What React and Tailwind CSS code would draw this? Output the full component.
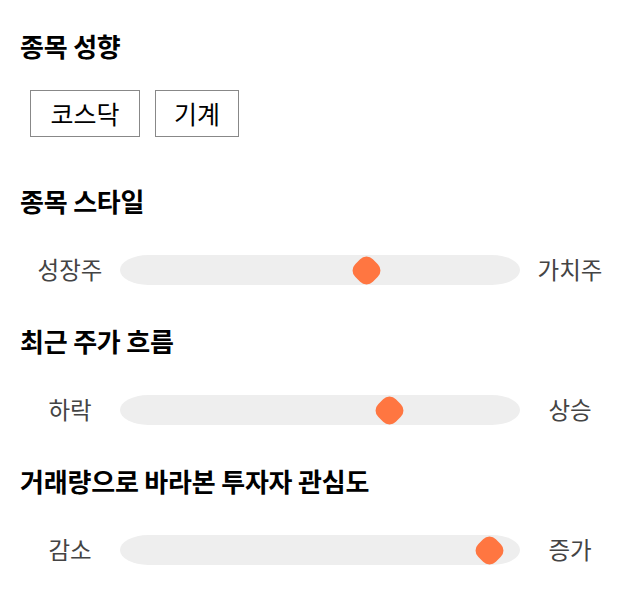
import React from "react";

const font = { fontFamily: '"Noto Sans CJK KR", "Noto Sans", sans-serif' };

function Heading({ children, className = "" }) {
  return (
    <h2 className={`h-[40px] leading-[40px] text-[26px] font-bold text-black tracking-[-0.2px] ${className}`}>
      {children}
    </h2>
  );
}

function Slider({ left, right, pos }) {
  return (
    <div className="flex items-center h-[40px]">
      <div className="w-[100px] text-center text-[23.5px] text-[#444]">{left}</div>
      <div className="relative w-[400px] h-[30px] bg-[#eeeeee] rounded-[28px/15px]">
        <div
          className="absolute top-[-1.5px] w-[25px] h-[25px] -ml-[12.5px] mt-[4px] rotate-45 rounded-[9px] bg-[#ff7641]"
          style={{ left: `${pos}px` }}
        />
      </div>
      <div className="w-[100px] text-center text-[23.5px] text-[#444]">{right}</div>
    </div>
  );
}

export default function App() {
  return (
    <div className="w-[640px] h-[606px] bg-white px-[20px] pt-[26px]" style={font}>
      <Heading>종목 성향</Heading>
      <div className="flex gap-[15px] ml-[10px] mt-[24px]">
        <div className="h-[47px] w-[110px] justify-center flex items-center border border-[#888] text-[25px] text-black">코스닥</div>
        <div className="h-[47px] w-[84px] justify-center flex items-center border border-[#888] text-[25px] text-black">기계</div>
      </div>
      <Heading className="mt-[44px]">종목 스타일</Heading>
      <div className="mt-[29px]">
        <Slider left="성장주" right="가치주" pos={246} />
      </div>
      <Heading className="mt-[31px]">최근 주가 흐름</Heading>
      <div className="mt-[29px]">
        <Slider left="하락" right="상승" pos={269} />
      </div>
      <Heading className="mt-[31px]">거래량으로 바라본 투자자 관심도</Heading>
      <div className="mt-[29px]">
        <Slider left="감소" right="증가" pos={369} />
      </div>
    </div>
  );
}
